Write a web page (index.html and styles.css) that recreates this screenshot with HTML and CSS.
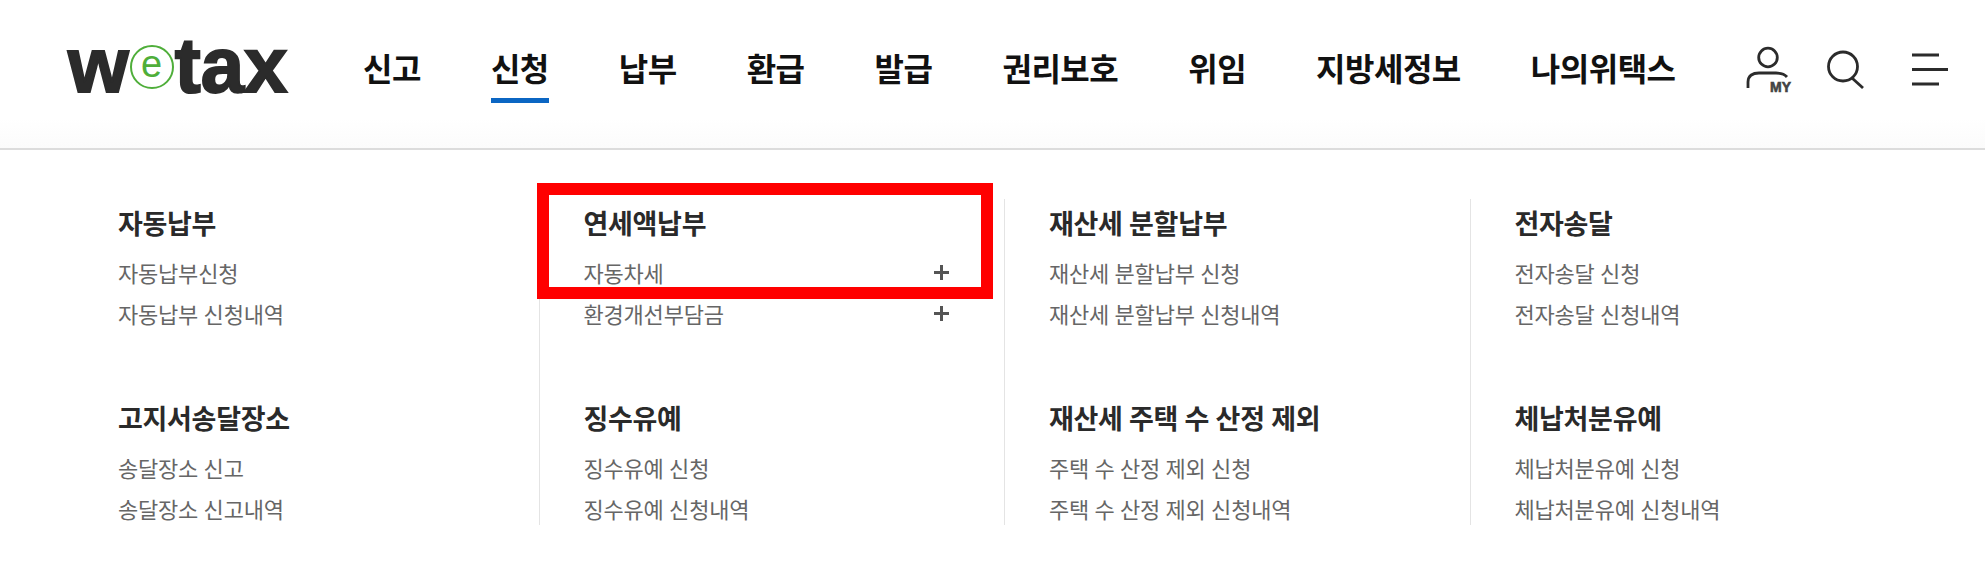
FILE: index.html
```html
<!DOCTYPE html>
<html lang="ko">
<head>
<meta charset="utf-8">
<title>wetax</title>
<link rel="stylesheet" href="styles.css">
</head>
<body>
<header class="header">
  <a class="logo"><span>w</span><span class="logo-e"><span>e</span></span><span>tax</span></a>
  <nav class="nav">
    <a>신고</a><a class="active">신청</a><a>납부</a><a>환급</a><a>발급</a><a>권리보호</a><a>위임</a><a>지방세정보</a><a>나의위택스</a>
  </nav>
  <div class="tools">
    <svg class="ic-my" width="48" height="48" viewBox="0 0 48 48" fill="none" stroke="#2b2b2b" stroke-width="2.8">
      <circle cx="22" cy="11.500" r="9.300"/>
      <path d="M2 42V36C2 29 7 27 13 27H30C35 27 38 27.500 41 31"/>
      <text x="24" y="46" class="my-text">MY</text>
    </svg>
    <svg class="ic-search" width="40" height="40" viewBox="0 0 40 40" fill="none" stroke="#2b2b2b" stroke-width="2.8">
      <circle cx="16" cy="15.500" r="14.500"/>
      <path d="M25 27L36 37"/>
    </svg>
    <svg class="ic-menu" width="38" height="34" viewBox="0 0 38 34" fill="none" stroke="#2b2b2b" stroke-width="3">
      <path d="M0 1H27M0 15.500H36M0 30H27"/>
    </svg>
  </div>
</header>
<main class="panel">
  <section class="col">
    <div class="group"><h3>자동납부</h3><ul><li>자동납부신청</li><li>자동납부 신청내역</li></ul></div>
    <div class="group"><h3>고지서송달장소</h3><ul><li>송달장소 신고</li><li>송달장소 신고내역</li></ul></div>
  </section>
  <section class="col">
    <div class="group"><h3>연세액납부</h3><ul><li class="more">자동차세<i></i></li><li class="more">환경개선부담금<i></i></li></ul></div>
    <div class="group"><h3>징수유예</h3><ul><li>징수유예 신청</li><li>징수유예 신청내역</li></ul></div>
    <div class="mark"></div>
  </section>
  <section class="col">
    <div class="group"><h3>재산세 분할납부</h3><ul><li>재산세 분할납부 신청</li><li>재산세 분할납부 신청내역</li></ul></div>
    <div class="group"><h3>재산세 주택 수 산정 제외</h3><ul><li>주택 수 산정 제외 신청</li><li>주택 수 산정 제외 신청내역</li></ul></div>
  </section>
  <section class="col">
    <div class="group"><h3>전자송달</h3><ul><li>전자송달 신청</li><li>전자송달 신청내역</li></ul></div>
    <div class="group"><h3>체납처분유예</h3><ul><li>체납처분유예 신청</li><li>체납처분유예 신청내역</li></ul></div>
  </section>
</main>
</body>
</html>
```
FILE: styles.css
```css
* { box-sizing: border-box; }
html, body { margin: 0; padding: 0; height: 570px; overflow: hidden; background: #fff; }
body { font-family: "Noto Sans CJK KR", "Noto Sans", sans-serif; color: #222; }
.header {
  height: 150px;
  display: flex;
  align-items: flex-start;
  padding-left: 68px;
  border-bottom: 2px solid #dcdcdc;
  background: linear-gradient(#fff 80%, #fbfbfb);
}
.logo {
  display: flex;
  width: 295px;
  height: 90px;
  margin-top: 20px;
  font: bold 78px/90px "Liberation Sans", sans-serif;
  color: #2b2b2b;
  -webkit-text-stroke: 2px #2b2b2b;
}
.logo-e {
  width: 44px;
  height: 44px;
  margin: 25px 1px 0 1px;
  border: 2.500px solid #4fae3a;
  border-radius: 50%;
  display: flex;
  align-items: center;
  justify-content: center;
  font: 400 38px/38px "Liberation Sans", sans-serif;
  color: #4fae3a;
  -webkit-text-stroke: 0;
}
.logo-e span { margin-top: -6px; }
.nav { display: flex; gap: 70px; margin-top: 46px; }
.nav a {
  display: block;
  height: 57px;
  font-size: 32px;
  line-height: 42px;
  font-weight: 700;
  letter-spacing: -0.5px;
  color: #111;
}
.nav a.active { border-bottom: 5px solid #0b66c3; }
.tools { position: absolute; left: 0; top: 0; width: 100%; height: 0; }
.tools svg { position: absolute; overflow: visible; }
.ic-my { left: 1746px; top: 46px; }
.ic-search { left: 1827px; top: 51px; }
.ic-menu { left: 1912px; top: 54px; }
.my-text { font: 900 14px "Liberation Sans", sans-serif; fill: #444; stroke: #444; stroke-width: 0.6; }
.panel { display: flex; padding: 49px 0 0 73px; height: 376px; }
.col {
  position: relative;
  width: 465.500px;
  padding-left: 44px;
  height: 326px;
  border-left: 1px solid #e4e4e4;
}
.col:first-child { border-left: 0; padding-left: 45px; }
.group { height: 195px; }
.group h3 {
  margin: 0;
  padding-top: 6px;
  font-size: 27px;
  line-height: 36px;
  font-weight: 700;
  letter-spacing: -0.3px;
  word-spacing: -0.8px;
  color: #2a2a2a;
}
.group ul { list-style: none; margin: 11px 0 0; padding: 0; }
.group li {
  position: relative;
  height: 41px;
  font-size: 22px;
  line-height: 41px;
  letter-spacing: -0.2px;
  word-spacing: -0.5px;
  color: #666;
}
.more { width: 365px; }
.more i {
  position: absolute;
  right: 0;
  top: 13px;
  width: 15px;
  height: 15px;
  background:
    linear-gradient(#555, #555) center / 15px 3px no-repeat,
    linear-gradient(#555, #555) center / 3px 15px no-repeat;
}
.mark {
  position: absolute;
  left: -3px;
  top: -16px;
  width: 456px;
  height: 116px;
  border: 12px solid #f00;
}
```
